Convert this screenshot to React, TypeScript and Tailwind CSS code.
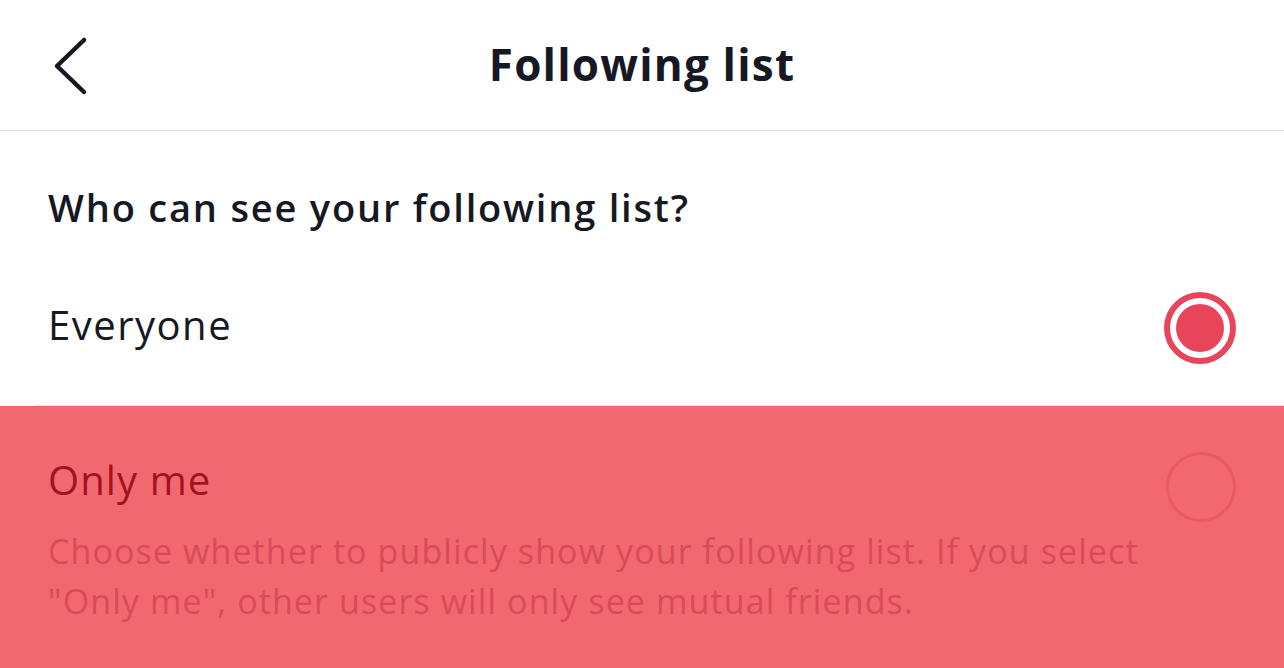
import React from "react";

const font = { fontFamily: '"Open Sans", "Liberation Sans", sans-serif' };

function Radio({ checked }: { checked: boolean }) {
  if (checked) {
    return (
      <div className="w-[72px] h-[72px] rounded-full border-[6px] border-[#e8445a] flex items-center justify-center">
        <div className="w-[48px] h-[48px] rounded-full bg-[#e8445a]" />
      </div>
    );
  }
  return <div className="w-[70px] h-[70px] rounded-full border-[3px] border-[#e65b66]" />;
}

export default function App() {
  return (
    <div style={font} className="w-[1284px] h-[668px] bg-white text-[#161823] overflow-hidden flex flex-col">
      {/* header */}
      <div className="h-[131px] border-b border-[#e1e1e3] flex items-center relative shrink-0">
        <button className="absolute left-[50px] top-[36px] w-[40px] h-[60px]">
          <svg width="40" height="60" viewBox="0 0 40 60" fill="none">
            <path d="M34 4 L7 30 L34 56" stroke="#161823" strokeWidth="4.5" strokeLinecap="round" strokeLinejoin="round" />
          </svg>
        </button>
        <div className="w-full text-center text-[44px] font-bold leading-none tracking-[1.2px] pb-[3px]">Following list</div>
      </div>

      {/* section title */}
      <div className="h-[119px] pl-[48px] pt-[53px] shrink-0">
        <div className="text-[38px] font-semibold leading-[46px] tracking-[1.8px]">Who can see your following list?</div>
      </div>

      {/* Everyone */}
      <div className="h-[155px] pl-[48px] pr-[48px] flex items-center justify-between shrink-0">
        <div className="text-[40px] leading-[48px] tracking-[1.5px] -mt-[6px]">Everyone</div>
        <Radio checked />
      </div>
      <div className="h-px ml-[36px] bg-[#dfe3df] shrink-0" />

      {/* Only me (highlighted) */}
      <div className="flex-1 bg-[#f16870] pl-[48px] pr-[48px] pt-[50px] flex justify-between">
        <div className="flex flex-col">
          <div className="text-[40px] leading-[48px] tracking-[1.1px] text-[#a3121f]">Only me</div>
          <div className="mt-[22px] text-[34px] leading-[50px] tracking-[1.1px] text-[#d94b59]">
            Choose whether to publicly show your following list. If you select
            <br />
            "Only me", other users will only see mutual friends.
          </div>
        </div>
        <div className="-mt-[4px]">
          <Radio checked={false} />
        </div>
      </div>
    </div>
  );
}
